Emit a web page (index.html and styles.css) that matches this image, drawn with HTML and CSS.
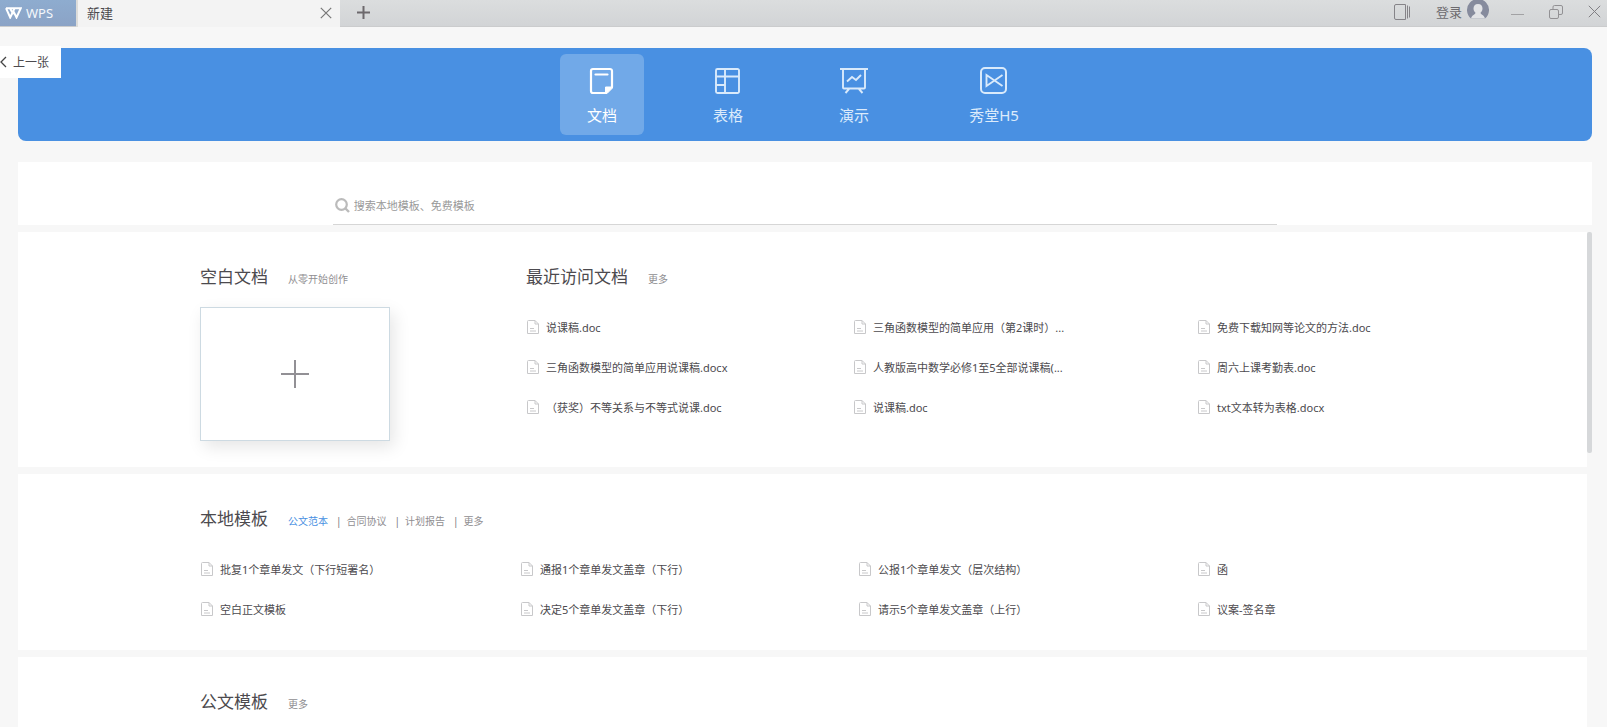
FILE: index.html
```html
<!DOCTYPE html>
<html lang="zh-CN">
<head>
<meta charset="utf-8">
<title>新建</title>
<link rel="stylesheet" href="styles.css">
</head>
<body>
<svg class="defs" aria-hidden="true">
  <symbol id="doc" viewBox="0 0 12 14"><path d="M1.5.5H8L11.5 4v9.5H.5V1.5a1 1 0 0 1 1-1zM8 .5V4h3.5M3 8.5h4M3 11h6" fill="none" stroke="currentColor"/></symbol>
</svg>
<header class="titlebar">
  <button class="brand"><svg width="17" height="12" viewBox="0 0 17 12"><path d="M1 1.2h14.8L11.5 10.5 8.3 4 5.2 10.5 1 1.2M5 1.2l3.3 6.2M8.3 4 9.6 1.2" fill="none" stroke="#fff" stroke-width="2"/></svg>WPS</button>
  <div class="tab"><span>新建</span>
    <button class="plain" aria-label="关闭标签"><svg width="12" height="12" viewBox="0 0 12 12"><path d="M.8.8l10.400 10.400M11.200.8.8 11.200" stroke="#777" fill="none" stroke-width="1.200"/></svg></button>
  </div>
  <button class="plain add" aria-label="新建标签"><svg width="13" height="13" viewBox="0 0 13 13"><path d="M6.500 0v13M0 6.500h13" stroke="#6c686c" stroke-width="2"/></svg></button>
  <div class="window-tools">
    <button class="plain" aria-label="侧栏"><svg width="17" height="16" viewBox="0 0 17 16"><path d="M.5 2a1.500 1.500 0 0 1 1.500-1.500h9.500v15H2A1.500 1.500 0 0 1 .5 14zM13.500 1.500v13M15.500 2.500v11" fill="none" stroke="#858388"/></svg></button>
    <button class="plain login">登录<svg width="22" height="20" viewBox="0 0 22 20"><path d="M4 18.500A11 11 0 1 1 18 18.500z" fill="#868b9d"/><path d="M11 4c3 0 4.500 2 4.500 4.500 0 2-1 3.500-2 4.200.3 2 3.500 2 4.500 5.800H4c1-3.800 4.200-3.800 4.500-5.800-1-.7-2-2.200-2-4.200C6.500 6 8 4 11 4z" fill="#e2e3e6"/></svg></button>
    <button class="plain" aria-label="最小化"><svg width="13" height="13" viewBox="0 0 13 13"><path d="M0 9.500h13" stroke="#a2a2a4"/></svg></button>
    <button class="plain" aria-label="还原"><svg width="14" height="14" viewBox="0 0 14 14"><path d="M.5 6A1.500 1.500 0 0 1 2 4.500h6A1.500 1.500 0 0 1 9.500 6v6A1.500 1.500 0 0 1 8 13.500H2A1.500 1.500 0 0 1 .5 12zM4 4.500V2A1.500 1.500 0 0 1 5.500.5H12A1.500 1.500 0 0 1 13.500 2v6A1.500 1.500 0 0 1 12 9.500H9.500" fill="none" stroke="#929194"/></svg></button>
    <button class="plain" aria-label="关闭"><svg width="13" height="13" viewBox="0 0 13 13"><path d="M.8.8l11.400 11.400M12.200.8.8 12.200" stroke="#807f83" fill="none"/></svg></button>
  </div>
</header>
<button class="previous"><svg width="7" height="12" viewBox="0 0 7 12"><path d="M6 1 1 6l5 5" fill="none" stroke="#444" stroke-width="1.300"/></svg>上一张</button>
<main class="page">
  <nav class="kinds">
    <button class="kind active"><svg width="28" height="28" viewBox="0 0 28 28"><path d="M24 20V4a2 2 0 0 0-2-2H5a2 2 0 0 0-2 2v20a2 2 0 0 0 2 2h13M7.500 7.500h12" fill="none" stroke="#fff" stroke-width="2.200" stroke-linecap="round"/><path d="M24.500 20v1l-5.500 5.500h-1.500V20z" fill="#fff" stroke="#fff"/></svg>文档</button>
    <button class="kind"><svg width="28" height="28" viewBox="0 0 28 28"><path d="M3.500 2h20a1.500 1.500 0 0 1 1.500 1.500v21a1.500 1.500 0 0 1-1.500 1.500h-20A1.500 1.500 0 0 1 2 24.500v-21A1.500 1.500 0 0 1 3.500 2zM11 2v24M2 9.500h23M2 18h9" fill="none" stroke="#d9eafb" stroke-width="1.900"/></svg>表格</button>
    <button class="kind"><svg width="28" height="28" viewBox="0 0 28 28"><path d="M0 2h28M3 2v18.500a1 1 0 0 0 1 1h20a1 1 0 0 0 1-1V2M9 22l-3.500 4M19 22l3.500 4M7 14.500l5-4.500 4 3 5-5" fill="none" stroke="#d9eafb" stroke-width="1.900"/></svg>演示</button>
    <button class="kind wide"><svg width="28" height="28" viewBox="0 0 28 28"><rect x="1" y="1" width="25" height="25" rx="4" fill="none" stroke="#d9eafb" stroke-width="2"/><path d="M22.500 8 6.500 19V8l16 11" fill="none" stroke="#d9eafb" stroke-width="1.900"/></svg>秀堂H5</button>
  </nav>
  <form class="search-panel">
    <label class="search"><svg width="15" height="15" viewBox="0 0 15 15"><path d="M10.500 10.500 14 14" stroke="#bbb" stroke-width="2.400"/><circle cx="6.500" cy="6.500" r="5.300" fill="none" stroke="#bbb" stroke-width="2.200"/></svg>
      <input type="search" aria-label="搜索模板" placeholder="搜索本地模板、免费模板"></label>
  </form>
  <div class="scroll">
    <div class="sections">
      <section class="panel split">
        <div>
          <div class="heading"><h2>空白文档</h2><span>从零开始创作</span></div>
          <button class="blank" aria-label="新建空白文档"><svg width="28" height="28" viewBox="0 0 28 28"><path d="M14 0v28M0 14h28" stroke="#929095" stroke-width="2"/></svg></button>
        </div>
        <div>
          <div class="heading"><h2>最近访问文档</h2><a href="#">更多</a></div>
          <div class="files recent">
            <a href="#"><svg><use href="#doc"/></svg>说课稿.doc</a>
            <a href="#"><svg><use href="#doc"/></svg>三角函数模型的简单应用（第2课时）...</a>
            <a href="#"><svg><use href="#doc"/></svg>免费下载知网等论文的方法.doc</a>
            <a href="#"><svg><use href="#doc"/></svg>三角函数模型的简单应用说课稿.docx</a>
            <a href="#"><svg><use href="#doc"/></svg>人教版高中数学必修1至5全部说课稿(...</a>
            <a href="#"><svg><use href="#doc"/></svg>周六上课考勤表.doc</a>
            <a href="#"><svg><use href="#doc"/></svg>（获奖）不等关系与不等式说课.doc</a>
            <a href="#"><svg><use href="#doc"/></svg>说课稿.doc</a>
            <a href="#"><svg><use href="#doc"/></svg>txt文本转为表格.docx</a>
          </div>
        </div>
      </section>
      <section class="panel">
        <div class="heading"><h2>本地模板</h2>
          <div class="filters"><a class="current" href="#">公文范本</a><a href="#">合同协议</a><a href="#">计划报告</a><a href="#">更多</a></div>
        </div>
        <div class="files local">
          <a href="#"><svg><use href="#doc"/></svg>批复1个章单发文（下行短署名）</a>
          <a href="#"><svg><use href="#doc"/></svg>通报1个章单发文盖章（下行）</a>
          <a href="#"><svg><use href="#doc"/></svg>公报1个章单发文（层次结构）</a>
          <a href="#"><svg><use href="#doc"/></svg>函</a>
          <a href="#"><svg><use href="#doc"/></svg>空白正文模板</a>
          <a href="#"><svg><use href="#doc"/></svg>决定5个章单发文盖章（下行）</a>
          <a href="#"><svg><use href="#doc"/></svg>请示5个章单发文盖章（上行）</a>
          <a href="#"><svg><use href="#doc"/></svg>议案-签名章</a>
        </div>
      </section>
      <section class="panel last">
        <div class="heading"><h2>公文模板</h2><a href="#">更多</a></div>
      </section>
    </div>
    <div class="thumb"></div>
  </div>
</main>
</body>
</html>
```
FILE: styles.css
```css
* { box-sizing: border-box; }
body {
  margin: 0;
  height: 100vh;
  overflow: hidden;
  display: flex;
  flex-direction: column;
  background: #f7f7f7;
  color: #4c4a4e;
  font-family: "Noto Sans", "Noto Sans CJK SC", sans-serif;
  font-size: 11px;
}
button, input { font: inherit; color: inherit; border: 0; padding: 0; background: none; }
button { cursor: pointer; }
a { color: inherit; text-decoration: none; }
svg { display: block; flex: none; }
.defs { position: absolute; width: 0; height: 0; }

.titlebar {
  flex: none;
  display: flex;
  height: 27px;
  background: linear-gradient(#dbddde, #d2d4d6);
  border-bottom: 1px solid #cbcccd;
  font-size: 13px;
}
.brand {
  display: flex;
  align-items: center;
  gap: 4px;
  width: 76px;
  padding-left: 5px;
  background: linear-gradient(#8eaccf, #8ba3c6);
  color: #f4f7fb;
  font-size: 13px;
}
.tab {
  display: flex;
  justify-content: space-between;
  align-items: center;
  width: 264px;
  margin-bottom: -1px;
  padding: 0 8px 2px 9px;
  border-left: 2px solid #dcdcda;
  background: #f3f3f3;
}
.plain { display: flex; align-items: center; }
.add { margin-left: 17px; padding-bottom: 2px; }
.window-tools {
  display: flex;
  align-items: center;
  gap: 25px;
  margin-left: auto;
  padding: 0 6px 3px 0;
  color: #6c6a6e;
}
.login { gap: 5px; margin-right: -3px; }
.login svg { margin-bottom: 3px; }

.previous {
  position: absolute;
  top: 46px;
  left: 0;
  display: flex;
  align-items: center;
  gap: 6px;
  width: 61px;
  height: 32px;
  background: #fff;
  font-size: 12px;
}

.page {
  flex: 1;
  min-height: 0;
  display: flex;
  flex-direction: column;
  padding: 21px 15px 0 18px;
}
.kinds {
  flex: none;
  display: flex;
  justify-content: center;
  gap: 42px;
  padding: 6px 0;
  border-radius: 8px;
  background: #4990e2;
}
.kind {
  display: flex;
  flex-direction: column;
  align-items: center;
  gap: 8px;
  width: 84px;
  height: 81px;
  padding-top: 13px;
  border-radius: 6px;
  color: #dcebfb;
  font-size: 15px;
  line-height: 24px;
}
.wide { width: 112px; }
.active { background: #71a9e8; color: #fff; }

.search-panel {
  flex: none;
  display: flex;
  justify-content: center;
  align-items: flex-end;
  height: 63px;
  margin: 21px 0 7px;
  background: #fff;
}
.search {
  display: flex;
  align-items: center;
  gap: 4px;
  width: 60%;
  height: 38px;
  padding-left: 2px;
  border-bottom: 1px solid #d6d6d6;
}
.search input { flex: 1; outline: 0; }
.search input::placeholder { color: #999; }

.scroll { flex: 1; min-height: 0; display: flex; }
.sections { flex: 1; display: flex; flex-direction: column; gap: 7px; }
.thumb { width: 5px; height: 221px; border-radius: 2px; background: #d6d8da; }
.panel {
  flex: none;
  padding: 33px 60px 21px 182px;
  background: #fff;
}
.split { display: grid; grid-template-columns: 326fr 1001fr; padding-bottom: 26px; }
.last { flex: 1 0 auto; }
.heading { display: flex; align-items: center; gap: 20px; height: 24px; margin-bottom: 18px; color: #8f8e91; font-size: 10px; }
.heading > span, .heading > a, .filters { padding-top: 2px; }
h2 { margin: 0; color: #4c4a4e; font-size: 17px; font-weight: 400; line-height: 24px; }
.blank {
  display: grid;
  place-items: center;
  width: 190px;
  height: 134px;
  border: 1px solid #cddae2;
  background: #fff;
  box-shadow: 4px 6px 16px rgba(0, 0, 0, 0.1);
}
.files { display: grid; grid-auto-rows: 40px; }
.recent { grid-template-columns: 327fr 344fr 330fr; }
.local { grid-template-columns: 320fr 338fr 339fr 330fr; }
.files a { display: flex; align-items: center; gap: 7px; padding-left: 1px; white-space: nowrap; }
.files svg { width: 12px; height: 14px; color: #c8c8ca; }
.filters { display: flex; }
.filters a + a::before { content: "|"; margin: 0 5px 0 8px; color: #77767a; }
.filters .current { color: #4990e2; }
```
